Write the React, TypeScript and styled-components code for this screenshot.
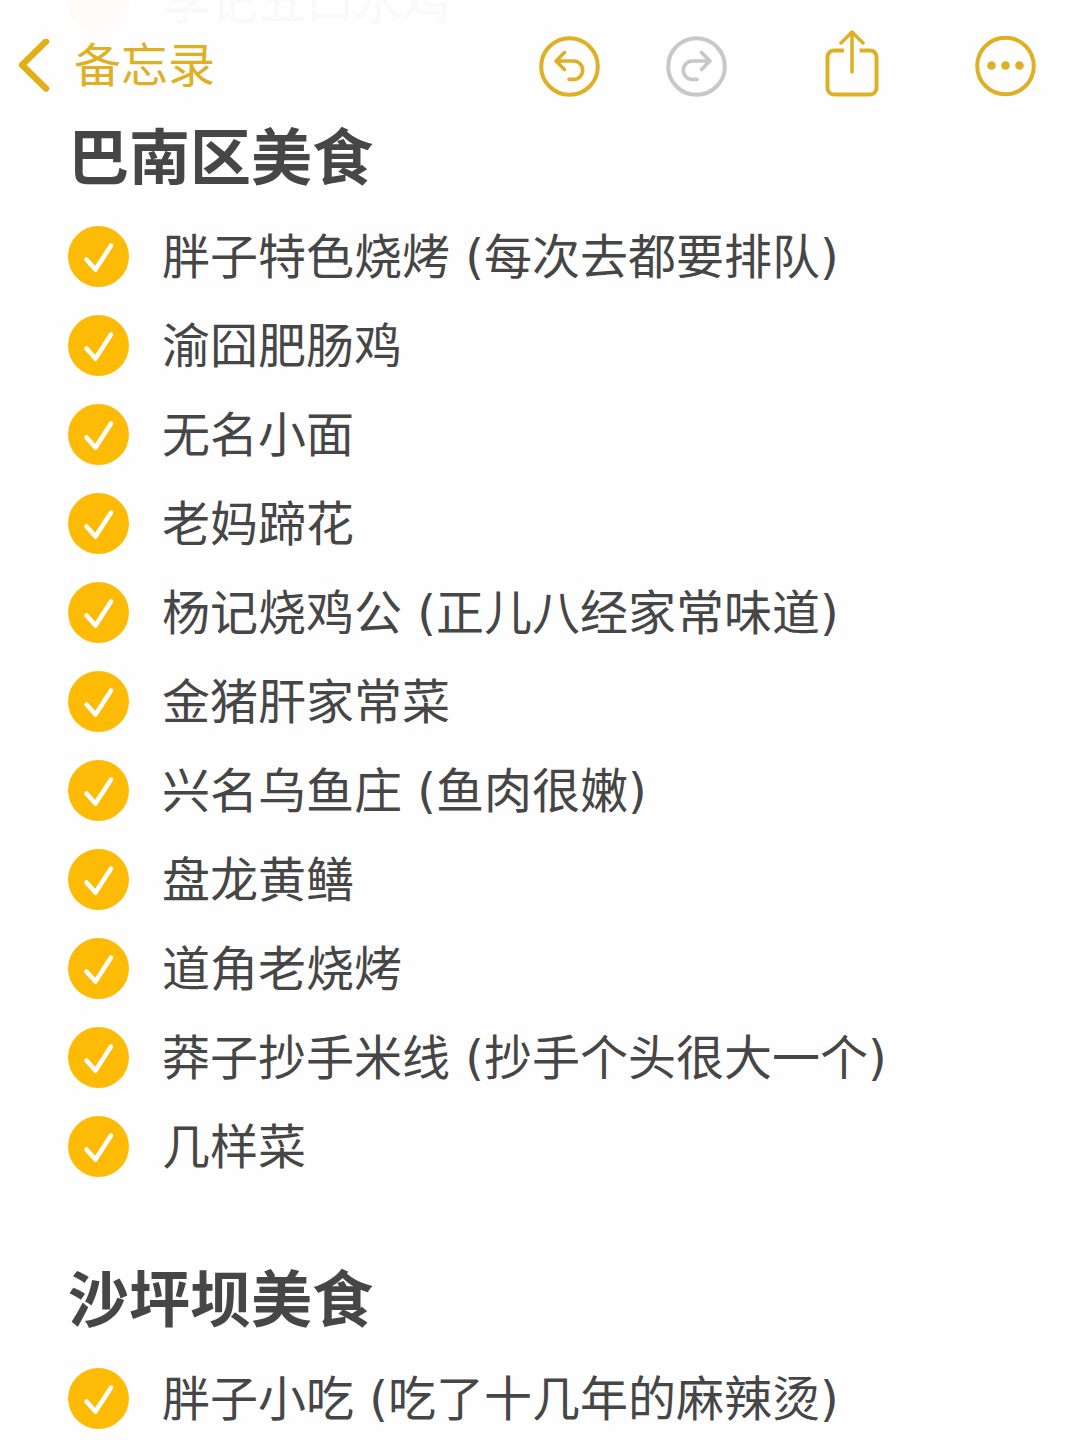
import React from "react";
import styled, { createGlobalStyle } from "styled-components";

const gold = "#deb026";
const ink = "#464646";

const GlobalStyle = createGlobalStyle`
  *, *::before, *::after { box-sizing: border-box; }
  body {
    margin: 0;
    background: #fefefe;
    color: ${ink};
    font-family: "DejaVu Sans", "Noto Sans CJK SC", sans-serif;
  }
`;

const Page = styled.div`
  position: relative;
  overflow: hidden;
`;

const Faded = styled.div`
  position: absolute;
  top: -28px;
  left: 68px;
  display: flex;
  align-items: center;
  gap: 33px;
  font-size: 48px;
  line-height: 61px;
  opacity: 0.02;
`;

const FadedDot = styled.span`
  width: 61px;
  height: 61px;
  border-radius: 50%;
  background: #febb06;
`;

const Toolbar = styled.header`
  display: flex;
  align-items: center;
  justify-content: space-between;
  height: 102px;
  padding: 30px 44px 0 18px;
`;

const BackLink = styled.a`
  display: flex;
  align-items: center;
  gap: 24px;
  color: ${gold};
  font-size: 47px;
  line-height: 68px;
  text-decoration: none;
`;

const Actions = styled.div`
  display: flex;
  align-items: center;
`;

const IconButton = styled.button<{ $gap?: number }>`
  display: flex;
  padding: 0;
  border: 0;
  margin-left: ${(p) => p.$gap ?? 0}px;
  background: none;
  color: ${gold};
  cursor: pointer;

  &:disabled {
    color: #c8c8c8;
    cursor: default;
  }
`;

const Icon = styled.svg`
  display: block;
  flex: none;
  fill: none;
  stroke: currentColor;
  stroke-linecap: round;
  stroke-linejoin: round;
`;

const Note = styled.main`
  padding: 12px 68px 0;
`;

const Section = styled.section`
  margin-bottom: 65px;
`;

const Heading = styled.h1`
  margin: 0 0 8px;
  font-size: 61px;
  font-weight: 700;
  line-height: 90px;
`;

const List = styled.ul`
  margin: 0;
  padding: 0;
  list-style: none;
`;

const Item = styled.label`
  display: flex;
  align-items: center;
  gap: 33px;
  height: 89px;
  font-size: 48px;
  line-height: 70px;
  white-space: nowrap;
`;

const Check = styled.input`
  appearance: none;
  flex: none;
  width: 61px;
  height: 61px;
  margin: 0;
  border: 3px solid #c8c8c8;
  border-radius: 50%;

  &:checked {
    border: 0;
    background: #febb06
      url("data:image/svg+xml,%3Csvg xmlns='http://www.w3.org/2000/svg' viewBox='0 0 61 61'%3E%3Cpath d='M18.5 33.5 L27.5 43.5 L43 19.5' fill='none' stroke='white' stroke-width='4.5' stroke-linecap='round' stroke-linejoin='round'/%3E%3C/svg%3E")
      center / 100% 100% no-repeat;
  }
`;

const sections = [
  {
    title: "巴南区美食",
    items: [
      "胖子特色烧烤 (每次去都要排队)",
      "渝囧肥肠鸡",
      "无名小面",
      "老妈蹄花",
      "杨记烧鸡公 (正儿八经家常味道)",
      "金猪肝家常菜",
      "兴名乌鱼庄 (鱼肉很嫩)",
      "盘龙黄鳝",
      "道角老烧烤",
      "莽子抄手米线 (抄手个头很大一个)",
      "几样菜",
    ],
  },
  {
    title: "沙坪坝美食",
    items: ["胖子小吃 (吃了十几年的麻辣烫)"],
  },
];

export default function App() {
  return (
    <Page>
      <GlobalStyle />
      <Faded aria-hidden="true">
        <FadedDot />
        李记五口水鸡
      </Faded>
      <Toolbar>
        <BackLink href="#">
          <Icon width="32" height="54" viewBox="0 0 32 54" strokeWidth="6.5">
            <path d="M28 2.500 L4 26 L28 49.500" stroke="#e2b016" />
          </Icon>
          备忘录
        </BackLink>
        <Actions>
          <IconButton type="button" aria-label="撤销">
            <Icon width="61" height="61" viewBox="0 0 61 61" strokeWidth="3.6">
              <circle cx="30.500" cy="30.500" r="28.300" strokeWidth="4" />
              <path d="M25.500 16.500 L17 25 L25.500 33.500 M17.500 25 H34.500 A9.200 9.200 0 0 1 34.500 43.400 H30" />
            </Icon>
          </IconButton>
          <IconButton type="button" aria-label="重做" disabled $gap={66}>
            <Icon width="61" height="61" viewBox="0 0 61 61" strokeWidth="3.6">
              <circle cx="30.500" cy="30.500" r="28.300" strokeWidth="4" />
              <path d="M35.500 16.500 L44 25 L35.500 33.500 M43.500 25 H26.500 A9.200 9.200 0 0 0 26.500 43.400 H31" />
            </Icon>
          </IconButton>
          <IconButton type="button" aria-label="共享" $gap={98}>
            <Icon width="54" height="72" viewBox="0 0 54 72" strokeWidth="4">
              <path
                d="M19 20.500 H9 A6.500 6.500 0 0 0 2.500 27 V58 A6.500 6.500 0 0 0 9 64.500 H45 A6.500 6.500 0 0 0 51.500 58 V27 A6.500 6.500 0 0 0 45 20.500 H34.500"
                strokeLinecap="butt"
              />
              <path d="M27 3 V42 M16 13 L27 2 L38 13" strokeWidth="3.5" />
            </Icon>
          </IconButton>
          <IconButton type="button" aria-label="更多" $gap={96}>
            <Icon width="61" height="61" viewBox="0 0 61 61" strokeWidth="4">
              <circle cx="30.500" cy="30" r="28.300" />
              <g fill="currentColor" stroke="none">
                <circle cx="16.500" cy="29.500" r="4.300" />
                <circle cx="30.500" cy="29.500" r="4.300" />
                <circle cx="44.500" cy="29.500" r="4.300" />
              </g>
            </Icon>
          </IconButton>
        </Actions>
      </Toolbar>
      <Note>
        {sections.map((section) => (
          <Section key={section.title}>
            <Heading>{section.title}</Heading>
            <List>
              {section.items.map((item) => (
                <li key={item}>
                  <Item>
                    <Check type="checkbox" defaultChecked />
                    <span>{item}</span>
                  </Item>
                </li>
              ))}
            </List>
          </Section>
        ))}
      </Note>
    </Page>
  );
}
